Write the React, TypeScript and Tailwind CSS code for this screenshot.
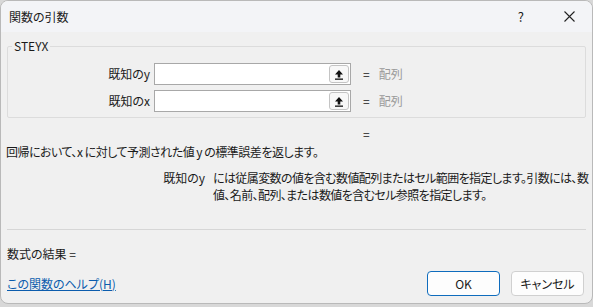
const jp = { fontFamily: '"Noto Sans CJK JP", "Noto Sans", sans-serif' };

function ArgRow({ label }: { label: string }) {
  return (
    <div className="flex h-[22px] items-center">
      <div className="w-[146px] pr-[4px] text-right text-[12px] leading-[16px] text-[#1a1a1a]">{label}</div>
      <div className="flex h-[22px] w-[197px] items-center justify-end border border-[#a8a8a8] bg-white pr-px">
        <div className="flex h-[18px] w-[20px] items-center justify-center rounded-[3px] border border-[#c4c4c4] bg-[#f8f8f8]">
          <svg width="10" height="11" viewBox="0 0 10 11">
            <path d="M5 1 L9 5.5 H6.3 V8.5 H3.7 V5.5 H1 Z" fill="#111" />
            <rect x="1" y="9.5" width="8" height="1.3" fill="#111" />
          </svg>
        </div>
      </div>
      <span className="ml-[12px] text-[12px] leading-[16px] text-[#222]">=</span>
      <span className="ml-[9px] text-[12px] leading-[16px] text-[#9a9a9a]">配列</span>
    </div>
  );
}

export default function App() {
  return (
    <div className="h-[307px] w-[593px] bg-[#d8d8d8] [font-feature-settings:'palt']" style={jp}>
      <div className="flex h-[304px] w-[593px] flex-col overflow-hidden rounded-[8px] border border-[#b9b9b9] bg-[#f0f0f0]">
        <div className="flex h-[31px] shrink-0 items-center bg-[#f3f4f7] pl-[8px] text-[12px] text-[#1a1a1a]">
          <span>関数の引数</span>
          <span className="ml-auto mr-[40px] text-[13px]">?</span>
          <svg className="mr-[17px]" width="11" height="11" viewBox="0 0 11 11">
            <path d="M0.5 0.5 L10.5 10.5 M10.5 0.5 L0.5 10.5" stroke="#222" strokeWidth="1.1" />
          </svg>
        </div>

        <div className="relative mx-[6px] mt-[14px] h-[72px] shrink-0 rounded-[2px] border border-[#dcdcdc]">
          <span className="absolute -top-[9px] left-[4px] bg-[#f0f0f0] px-[2px] text-[12px] leading-[16px] text-[#1a1a1a]">STEYX</span>
          <div className="mt-[16px] flex flex-col gap-[5px]">
            <ArgRow label="既知のy" />
            <ArgRow label="既知のx" />
          </div>
        </div>

        <div className="mt-[8px] pl-[362px] text-[12px] leading-[16px] text-[#222]">=</div>
        <div className="mt-[2px] pl-[5px] text-[12px] leading-[16px] tracking-[-0.5px] text-[#1a1a1a]">
          回帰において、x に対して予測された値 y の標準誤差を返します。
        </div>
        <div className="mt-[9px] flex text-[12px] leading-[17px] text-[#1a1a1a]">
          <div className="w-[212px] pr-[8px] text-right">既知のy</div>
          <div className="w-[374px] whitespace-nowrap tracking-[-0.6px]">
            には従属変数の値を含む数値配列またはセル範囲を指定します。引数には、数
            <br />
            値、名前、配列、または数値を含むセル参照を指定します。
          </div>
        </div>

        <div className="mx-[6px] mt-[26px] shrink-0 border-t border-[#d6d6d6]" />
        <div className="mt-[16px] pl-[6px] text-[12px] leading-[16px] text-[#1a1a1a]">数式の結果 =</div>

        <div className="mt-[9px] flex items-center pl-[6px] pr-[8px]">
          <a className="text-[12px] leading-[16px] text-[#0b5cad] underline">この関数のヘルプ(H)</a>
          <button className="ml-auto h-[25px] w-[73px] rounded-[4px] border border-[#0f6cbd] bg-[#fdfdfd] text-[12px] text-[#1a1a1a]">
            OK
          </button>
          <button className="ml-[11px] h-[25px] w-[73px] rounded-[4px] border border-[#d0d0d0] bg-[#fdfdfd] text-[12px] text-[#1a1a1a]">
            キャンセル
          </button>
        </div>
      </div>
    </div>
  );
}
